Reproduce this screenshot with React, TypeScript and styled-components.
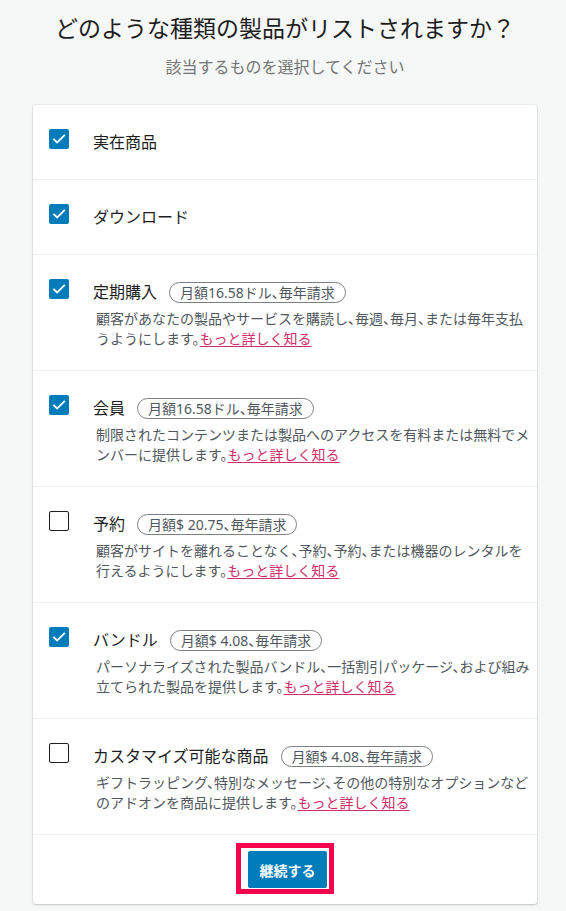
import React, { useState } from "react";
import styled, { createGlobalStyle } from "styled-components";

const GlobalStyle = createGlobalStyle`
  html, body {
    margin: 0;
    padding: 0;
    background: #f6f7f7;
  }
  body {
    font-family: "Noto Sans", "Noto Sans CJK JP", sans-serif;
    color: #1e1e1e;
  }
  * { box-sizing: border-box; }
`;

const Page = styled.div`
  display: flex;
  flex-direction: column;
  padding: 12px 0 6px 33px;
  width: 566px;
`;

const Header = styled.header`
  display: flex;
  flex-direction: column;
  align-items: center;
  width: 504px;
  margin-bottom: 26px;
`;

const Title = styled.h1`
  margin: 0;
  font-size: 23px;
  line-height: 32px;
  font-weight: 400;
  color: #1e1e1e;
  white-space: nowrap;
`;

const Subtitle = styled.p`
  margin: 11px 0 0;
  font-size: 16px;
  line-height: 24px;
  color: #757575;
`;

const Card = styled.section`
  width: 504px;
  background: #fff;
  border-radius: 3px;
  box-shadow: 0 0 0 1px rgba(0, 0, 0, 0.04), 0 1px 2px rgba(0, 0, 0, 0.18);
  display: flex;
  flex-direction: column;
`;

const Row = styled.label`
  display: flex;
  align-items: flex-start;
  gap: 24px;
  padding: 24px 16px;
  border-bottom: 1px solid #f0f0f0;
  cursor: pointer;
`;

const Box = styled.span<{ $checked: boolean }>`
  flex: none;
  width: 20px;
  height: 20px;
  border-radius: 2px;
  display: flex;
  align-items: center;
  justify-content: center;
  background: ${(p) => (p.$checked ? "#007cba" : "#fff")};
  border: ${(p) => (p.$checked ? "none" : "1.5px solid #1e1e1e")};
`;

const Body = styled.div`
  display: flex;
  flex-direction: column;
  min-width: 0;
`;

const TitleLine = styled.div`
  display: flex;
  align-items: center;
  gap: 12px;
  height: 26px;
`;

const ItemTitle = styled.span`
  font-size: 16px;
  line-height: 26px;
  color: #1e1e1e;
  white-space: nowrap;
`;

const Badge = styled.span`
  display: inline-flex;
  align-items: center;
  height: 21px;
  padding: 0 10px;
  border: 1px solid #7c7f84;
  border-radius: 11px;
  font-size: 14px;
  color: #50575e;
  white-space: nowrap;
  font-feature-settings: "halt";
`;

const Desc = styled.p`
  margin: 4px 0 -3px 3px;
  font-size: 14px;
  line-height: 20px;
  color: #50575e;
  white-space: nowrap;
  font-feature-settings: "halt";
`;

const More = styled.a`
  color: #cf2e6a;
  text-decoration: underline;
  text-underline-offset: 2px;
`;

const Footer = styled.div`
  display: flex;
  justify-content: center;
  padding: 8px 0 10px;
`;

const Highlight = styled.div`
  display: flex;
  border: 5px solid #f5004d;
  padding: 3px 2px 1px 7px;
`;

const Button = styled.button`
  width: 79px;
  height: 37px;
  border: none;
  border-radius: 2px;
  background: #007cba;
  color: #fff;
  font-family: "Noto Sans", "Noto Sans CJK JP", sans-serif;
  font-size: 14px;
  font-weight: 700;
  cursor: pointer;
`;

type Item = {
  title: string;
  badge?: string;
  lines?: [string, string];
  checked: boolean;
};

const items: Item[] = [
  { title: "実在商品", checked: true },
  { title: "ダウンロード", checked: true },
  {
    title: "定期購入",
    badge: "月額16.58ドル、毎年請求",
    lines: ["顧客があなたの製品やサービスを購読し、毎週、毎月、または毎年支払", "うようにします。"],
    checked: true,
  },
  {
    title: "会員",
    badge: "月額16.58ドル、毎年請求",
    lines: ["制限されたコンテンツまたは製品へのアクセスを有料または無料でメ", "ンバーに提供します。"],
    checked: true,
  },
  {
    title: "予約",
    badge: "月額$ 20.75、毎年請求",
    lines: ["顧客がサイトを離れることなく、予約、予約、または機器のレンタルを", "行えるようにします。"],
    checked: false,
  },
  {
    title: "バンドル",
    badge: "月額$ 4.08、毎年請求",
    lines: ["パーソナライズされた製品バンドル、一括割引パッケージ、および組み", "立てられた製品を提供します。"],
    checked: true,
  },
  {
    title: "カスタマイズ可能な商品",
    badge: "月額$ 4.08、毎年請求",
    lines: ["ギフトラッピング、特別なメッセージ、その他の特別なオプションなど", "のアドオンを商品に提供します。"],
    checked: false,
  },
];

const Check = () => (
  <svg width="16" height="16" viewBox="0 0 16 16" fill="none">
    <path d="M3 8.4l3.2 3.1L13.2 4.6" stroke="#fff" strokeWidth="1.8" strokeLinecap="square" />
  </svg>
);

export default function App() {
  const [state, setState] = useState(items.map((i) => i.checked));
  return (
    <>
      <GlobalStyle />
      <Page>
        <Header>
          <Title>どのような種類の製品がリストされますか？</Title>
          <Subtitle>該当するものを選択してください</Subtitle>
        </Header>
        <Card>
          {items.map((item, idx) => (
            <Row
              key={item.title}
              onClick={(e) => {
                e.preventDefault();
                setState((s) => s.map((v, i) => (i === idx ? !v : v)));
              }}
            >
              <Box $checked={state[idx]}>{state[idx] && <Check />}</Box>
              <Body>
                <TitleLine>
                  <ItemTitle>{item.title}</ItemTitle>
                  {item.badge && <Badge>{item.badge}</Badge>}
                </TitleLine>
                {item.lines && (
                  <Desc>
                    {item.lines[0]}
                    <br />
                    {item.lines[1]}
                    <More href="#">もっと詳しく知る</More>
                  </Desc>
                )}
              </Body>
            </Row>
          ))}
          <Footer>
            <Highlight>
              <Button>継続する</Button>
            </Highlight>
          </Footer>
        </Card>
      </Page>
    </>
  );
}
